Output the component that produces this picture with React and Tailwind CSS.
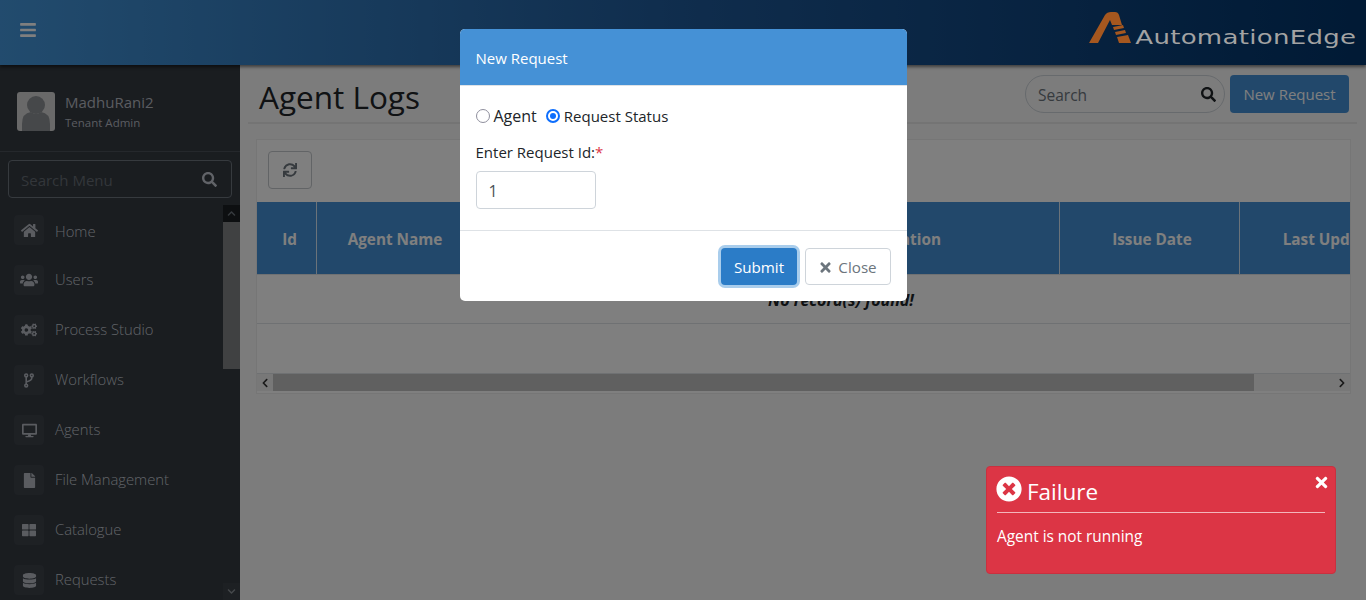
import React from "react";
import {
  FaBars,
  FaHome,
  FaUsers,
  FaCogs,
  FaDesktop,
  FaFile,
  FaThLarge,
  FaDatabase,
  FaSearch,
  FaSync,
  FaTimes,
  FaTimesCircle,
  FaChevronUp,
  FaChevronDown,
  FaChevronLeft,
  FaChevronRight,
} from "react-icons/fa";

// narrow code-fork, the one in the icon package is too wide here
const ForkIcon = () => (
  <svg width="10" height="15" viewBox="0 0 10 15" fill="none" stroke="currentColor" strokeWidth="1.6">
    <circle cx="2.2" cy="2.4" r="1.4" />
    <circle cx="7.8" cy="2.4" r="1.4" />
    <circle cx="2.2" cy="12.6" r="1.4" />
    <path d="M2.2 3.8 V11.2 M7.8 3.8 V5 Q7.8 7.5 2.2 9" />
  </svg>
);

const menu = [
  { label: "Home", icon: <FaHome size={17} />, leading: "leading-[33px]" },
  { label: "Users", icon: <FaUsers size={18} />, leading: "leading-[29px]" },
  { label: "Process Studio", icon: <FaCogs size={16} />, leading: "leading-[29px]" },
  { label: "Workflows", icon: <ForkIcon />, leading: "leading-[29px]" },
  { label: "Agents", icon: <FaDesktop size={15} />, leading: "leading-[29px]" },
  { label: "File Management", icon: <FaFile size={15} />, leading: "leading-[29px]" },
  { label: "Catalogue", icon: <FaThLarge size={14} />, leading: "leading-[29px]" },
  { label: "Requests", icon: <FaDatabase size={15} />, leading: "leading-[29px]" },
];

const columns = [
  { label: "Id", width: "w-[60px] pl-[6px]" },
  { label: "Agent Name", width: "w-[157px]" },
  { label: "Request Type", width: "w-[271px]" },
  { label: "Operation", width: "w-[315px]" },
  { label: "Issue Date", width: "w-[180px] pl-[5px]" },
  { label: "Last Updated", width: "w-[188px]" },
];

const Logo = () => (
  <div className="relative z-10 flex items-end mr-[10px] mb-[10px]">
    <svg width="44" height="32" viewBox="0 0 44 32" className="mr-[63px]">
      <path d="M1 31 L17 3 Q19 0 23 0 L27 0 Q30 0 31 3 L34 13 L24 13 L22 8 L10 31 Z" fill="#a5571f" />
      <path d="M25 15 L35 13 L36 16 L26 18 Z M27 20 L37 18 L38 21 L28 23 Z M29 25 L40 23 L43 31 L31 31 Z" fill="#a5571f" />
    </svg>
    <span className="mb-[-3px] origin-right scale-x-[1.37] font-['DejaVu_Sans',sans-serif] text-[19px] leading-[20px] tracking-[0.2px] text-[#a3a3a3]">
      AutomationEdge
    </span>
  </div>
);

const Sidebar = () => (
  <aside className="w-[240px] h-[535px] shrink-0 bg-[#343a40] flex flex-col overflow-hidden">
    <div className="h-[87px] shrink-0 border-b border-[#4b5158] pl-[17px] pt-[27px] flex">
      <div className="w-[38px] h-[39px] rounded-[3px] bg-[#d2d2d2] overflow-hidden">
        <svg viewBox="0 0 38 39" width="38" height="39">
          <circle cx="19" cy="13" r="9" fill="#8c9094" />
          <path d="M5 39 V32 Q5 21 14 20 Q19 24 24 20 Q33 21 33 32 V39 Z" fill="#8c9094" />
        </svg>
      </div>
      <div className="ml-[10px]">
        <div className="text-[15px] leading-[20px] text-[#b4b9c1]">MadhuRani2</div>
        <div className="text-[11.5px] leading-[16px] mt-[3px] text-[#b4b9c1]">Tenant Admin</div>
      </div>
    </div>
    <div className="mx-[8px] mt-[8px] h-[38px] shrink-0 rounded-[4px] border border-[#6c757d] flex items-center justify-between pl-[12px] pr-[14px]">
      <span className="text-[15px] leading-[22px] pt-px text-[#666d75]">Search Menu</span>
      <FaSearch size={15} className="text-[#c2c7d0]" />
    </div>
    <div className="flex mt-[7px] flex-1 min-h-0">
      <nav className="w-[223px] pl-[14px] pt-[10px]">
        {menu.map(({ label, icon, leading }) => (
          <div key={label} className="h-[50px] flex items-start">
            <div className="w-[30px] h-[30px] rounded-[4px] bg-[#3c4249] flex items-center justify-center text-[#b4b9c1]">
              {icon}
            </div>
            <span className={`ml-[11px] text-[14.8px] font-light ${leading} text-[#c2c7d0]`}>{label}</span>
          </div>
        ))}
      </nav>
      <div className="w-[17px] flex flex-col">
        <div className="h-[17px] bg-[#1b1e22] flex items-center justify-center text-[#6c757d]">
          <FaChevronUp size={9} />
        </div>
        <div className="h-[147px] bg-[#808285]" />
        <div className="flex-1" />
        <div className="h-[17px] bg-[#3a4046] flex items-center justify-center text-[#8a9096]">
          <FaChevronDown size={9} />
        </div>
      </div>
    </div>
  </aside>
);

const TitleBar = () => (
  <div className="h-[52px] ml-[8px] mr-[9px] mt-[7px] pl-[11px] pr-[8px] border-b-2 border-[#e8e8e8] flex items-start justify-between">
    <h1 className="text-[31.5px] leading-[50px] text-[#212529]">Agent Logs</h1>
    <div className="flex gap-[5px] items-center pt-[3px]">
      <div className="w-[200px] h-[38px] rounded-full border border-[#ced4da] bg-[#f8f8f8] flex items-center justify-between pl-[12px] pr-[8px]">
        <span className="text-[15.5px] pt-[3px] text-[#6c757d]">Search</span>
        <FaSearch size={15} className="text-[#212529]" />
      </div>
      <button className="w-[119px] h-[38px] rounded-[4px] bg-[#4591d6] text-[15px] text-white">New Request</button>
    </div>
  </div>
);

const LogsTable = () => (
  <div className="mt-[15px] ml-[16px] mr-[15px] h-[255px] bg-white border border-[#ececec] flex flex-col overflow-hidden">
    <div className="h-[62px] shrink-0 pl-[11px] pt-[11px]">
      <button className="w-[44px] h-[38px] rounded-[4px] border border-[#c4c8cc] flex items-center justify-center text-[#6c757d]">
        <FaSync size={14} />
      </button>
    </div>
    <div className="flex h-[73px] shrink-0 bg-[#4591d6] overflow-hidden border-b border-[#dee2e6]">
      {columns.map((col) => (
        <div
          key={col.label}
          className={`${col.width} shrink-0 pt-[3px] border-r border-[#d7e6f5] flex items-center justify-center text-[15.3px] font-bold text-white whitespace-nowrap`}
        >
          {col.label}
        </div>
      ))}
    </div>
    <div className="h-[48px] w-[1168px] shrink-0 pt-px flex items-center justify-center text-[16px] font-bold italic text-[#212529]">
      No record(s) found!
    </div>
    <div className="h-[51px] shrink-0 border-y border-[#dee2e6]" />
    <div className="h-[17px] shrink-0 flex items-center bg-[#f1f1f1]">
      <div className="w-[16px] flex justify-center text-[#333]">
        <FaChevronLeft size={10} />
      </div>
      <div className="w-[981px] h-full bg-[#c1c1c1]" />
      <div className="flex-1 flex justify-end pr-[3px] text-[#333]">
        <FaChevronRight size={10} />
      </div>
    </div>
  </div>
);

const RequestModal = () => (
  <div className="w-[447px] h-[272px] mt-[29px] bg-white rounded-[5px] overflow-hidden flex flex-col">
    <div className="h-[57px] shrink-0 bg-[#4591d6] border-b border-[#dee2e6] pl-[16px] pt-[2px] flex items-center text-[15px] text-white">
      New Request
    </div>
    <div className="h-[145px] shrink-0 border-b border-[#dee2e6] pl-[16px] pt-[19px]">
      <div className="flex items-center h-[22px] leading-[22px] text-[#212529]">
        <span className="w-[14px] h-[14px] rounded-full border-[1.5px] border-[#8f8f9d]" />
        <span className="ml-[4px] text-[16px]">Agent</span>
        <span className="ml-[9px] w-[14px] h-[14px] rounded-full border-2 border-[#0d6efd] flex items-center justify-center">
          <span className="w-[6px] h-[6px] rounded-full bg-[#0d6efd]" />
        </span>
        <span className="ml-[4px] pb-px text-[15px]">Request Status</span>
      </div>
      <div className="mt-[15px] text-[15px] leading-[20px] text-[#212529]">
        Enter Request Id:<span className="text-[#dc3545]">*</span>
      </div>
      <div className="mt-[9px] w-[120px] h-[38px] rounded-[4px] border border-[#ced4da] pl-[12px] pt-px flex items-center text-[16px] text-[#495057]">
        1
      </div>
    </div>
    <div className="flex-1 flex justify-end gap-[8px] pr-[16px] pt-[17px]">
      <button className="w-[76px] h-[37px] pt-[2px] pl-px rounded-[4px] bg-[#2b7cc7] text-[15.2px] text-white ring-[3px] ring-[#a9cdec]">
        Submit
      </button>
      <button className="w-[86px] h-[37px] pt-[2px] rounded-[4px] border border-[#ced4da] text-[15.2px] text-[#6c757d] flex items-center justify-center gap-[5px]">
        <FaTimes size={15} />
        Close
      </button>
    </div>
  </div>
);

const FailureToast = () => (
  <div className="absolute left-[986px] top-[466px] w-[350px] h-[108px] rounded-[4px] bg-[#dc3545] border border-[#c9303f] px-[10px] pt-[7px] text-white">
    <FaTimes size={17} className="absolute right-[5px] top-[7px]" />
    <div className="flex items-start h-[39px] border-b border-[#f3b6bc]">
      <FaTimesCircle size={26} className="-ml-px mt-[2px]" />
      <span className="ml-[5px] text-[22.5px] leading-[36px]">Failure</span>
    </div>
    <div className="mt-[13px] text-[15.4px] leading-[22px]">Agent is not running</div>
  </div>
);

export default function App() {
  return (
    <div className="relative w-[1366px] h-[600px] overflow-hidden bg-[#f8f8f8] font-['Open_Sans',sans-serif]">
      <header className="relative h-[65px] bg-gradient-to-r from-[#4497dc] via-[#1f5a9a] to-[#02346a] shadow-[0_2px_3px_rgba(0,0,0,0.5)] flex items-center justify-between">
        <FaBars size={18} className="ml-[19px] mb-[5px] text-white" />
        <Logo />
      </header>
      <div className="flex">
        <Sidebar />
        <main className="flex-1 min-w-0">
          <TitleBar />
          <LogsTable />
        </main>
      </div>
      <div className="absolute inset-0 bg-black/50 flex justify-center items-start">
        <RequestModal />
      </div>
      <FailureToast />
    </div>
  );
}
